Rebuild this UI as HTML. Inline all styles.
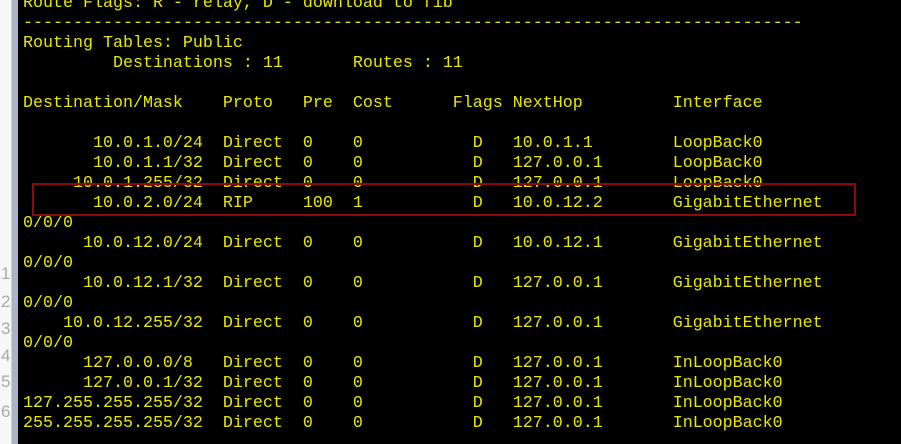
<!DOCTYPE html>
<html><head><meta charset="utf-8"><style>
html,body{margin:0;padding:0;width:901px;height:444px;overflow:hidden;background:#000;}
#side{position:absolute;left:0;top:0;width:11px;height:444px;background:#f7f7f7;overflow:hidden;}
#bar{position:absolute;left:11px;top:0;width:7px;height:444px;background:#aab4c4;border-left:1px solid #c8cfd9;box-sizing:border-box;}
.ln{position:absolute;left:1px;font:17px "Liberation Sans",sans-serif;color:#aaa;}
pre{position:absolute;left:23px;top:-6px;margin:0;font-family:"Liberation Mono",monospace;font-size:16.67px;line-height:20px;color:#e8e800;}
#box{position:absolute;left:32px;top:183px;width:824px;height:33px;border:2.5px solid #8b0a0a;box-sizing:border-box;}
</style></head><body>
<div id="side">
<div class="ln" style="top:264px">1</div>
<div class="ln" style="top:292px">2</div>
<div class="ln" style="top:319px">3</div>
<div class="ln" style="top:346px">4</div>
<div class="ln" style="top:372px">5</div>
<div class="ln" style="top:402px">6</div>
</div><div id="bar"></div>
<pre>Route Flags: R - relay, D - download to fib
------------------------------------------------------------------------------
Routing Tables: Public
         Destinations : 11       Routes : 11

Destination/Mask    Proto   Pre  Cost      Flags NextHop         Interface

       10.0.1.0/24  Direct  0    0           D   10.0.1.1        LoopBack0
       10.0.1.1/32  Direct  0    0           D   127.0.0.1       LoopBack0
     10.0.1.255/32  Direct  0    0           D   127.0.0.1       LoopBack0
       10.0.2.0/24  RIP     100  1           D   10.0.12.2       GigabitEthernet
0/0/0
      10.0.12.0/24  Direct  0    0           D   10.0.12.1       GigabitEthernet
0/0/0
      10.0.12.1/32  Direct  0    0           D   127.0.0.1       GigabitEthernet
0/0/0
    10.0.12.255/32  Direct  0    0           D   127.0.0.1       GigabitEthernet
0/0/0
      127.0.0.0/8   Direct  0    0           D   127.0.0.1       InLoopBack0
      127.0.0.1/32  Direct  0    0           D   127.0.0.1       InLoopBack0
127.255.255.255/32  Direct  0    0           D   127.0.0.1       InLoopBack0
255.255.255.255/32  Direct  0    0           D   127.0.0.1       InLoopBack0</pre>
<div id="box"></div>
</body></html>
